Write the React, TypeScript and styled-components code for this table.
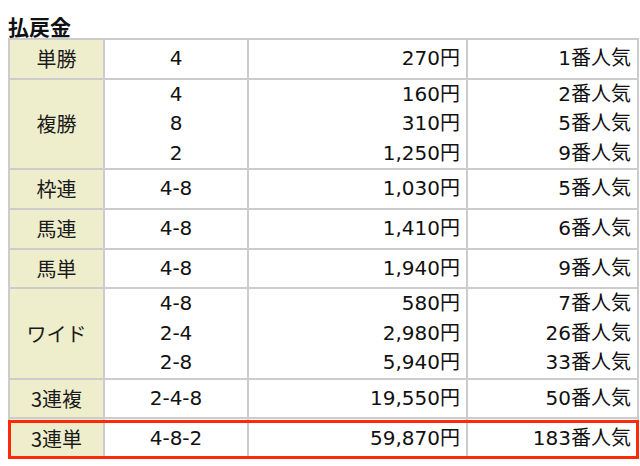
import React from "react";
import styled, { createGlobalStyle } from "styled-components";

const Global = createGlobalStyle`
  html, body { margin: 0; padding: 0; background: #fff; }
  body {
    font-family: "DejaVu Sans", "Noto Sans CJK JP", sans-serif;
    color: #111;
  }
`;

const Page = styled.div`
  padding: 14px 0 0 8px;
`;

const Heading = styled.h2`
  margin: 0;
  font-size: 21px;
  line-height: 24px;
  font-weight: bold;
  font-family: "Noto Sans CJK JP", sans-serif;
  color: #111;
`;

const TableWrap = styled.div`
  position: relative;
  width: 629px;
`;

const Table = styled.table`
  width: 629px;
  table-layout: fixed;
  border-collapse: separate;
  border-spacing: 0;
  border: 1px solid #ccc;
  font-size: 20px;
`;

const Col = styled.col<{ $w: number }>`
  width: ${(p) => p.$w}px;
`;

const Label = styled.th`
  background: #eeeecd;
  border: 1px solid #ccc;
  font-weight: normal;
  font-family: "Noto Sans CJK JP", sans-serif;
  font-size: 20px;
  color: #1a1a1a;
  text-align: center;
  padding: 0;
  height: 37.7px;
  line-height: 29.5px;
`;

const Cell = styled.td<{ $align: "center" | "right" }>`
  background: #fff;
  border: 1px solid #ccc;
  text-align: ${(p) => p.$align};
  padding: 0 ${(p) => (p.$align === "right" ? "6px" : "0")} 0 0;
  height: 37.7px;
  line-height: 29.5px;
  font-family: "DejaVu Sans", "Noto Sans CJK JP", sans-serif;
  color: #111;
  white-space: nowrap;
`;

const Line = styled.div`
  display: block;
`;

const Highlight = styled.div`
  position: absolute;
  left: 0;
  right: -2px;
  bottom: 0;
  height: 39px;
  border: 3px solid #ff2a0a;
  box-sizing: border-box;
  pointer-events: none;
`;

type Entry = [string, string, string];
type Row = { label: string; entries: Entry[] };

const rows: Row[] = [
  { label: "単勝", entries: [["4", "270円", "1番人気"]] },
  {
    label: "複勝",
    entries: [
      ["4", "160円", "2番人気"],
      ["8", "310円", "5番人気"],
      ["2", "1,250円", "9番人気"],
    ],
  },
  { label: "枠連", entries: [["4-8", "1,030円", "5番人気"]] },
  { label: "馬連", entries: [["4-8", "1,410円", "6番人気"]] },
  { label: "馬単", entries: [["4-8", "1,940円", "9番人気"]] },
  {
    label: "ワイド",
    entries: [
      ["4-8", "580円", "7番人気"],
      ["2-4", "2,980円", "26番人気"],
      ["2-8", "5,940円", "33番人気"],
    ],
  },
  { label: "3連複", entries: [["2-4-8", "19,550円", "50番人気"]] },
  { label: "3連単", entries: [["4-8-2", "59,870円", "183番人気"]] },
];

const Stack = ({ items }: { items: string[] }) => (
  <>
    {items.map((t, i) => (
      <Line key={i}>{t}</Line>
    ))}
  </>
);

export default function App() {
  return (
    <>
      <Global />
      <Page>
        <Heading>払戻金</Heading>
        <TableWrap>
          <Table>
            <colgroup>
              <Col $w={95} />
              <Col $w={144} />
              <Col $w={219} />
              <Col $w={171} />
            </colgroup>
            <tbody>
              {rows.map((r) => (
                <tr key={r.label}>
                  <Label>{r.label}</Label>
                  <Cell $align="center">
                    <Stack items={r.entries.map((e) => e[0])} />
                  </Cell>
                  <Cell $align="right">
                    <Stack items={r.entries.map((e) => e[1])} />
                  </Cell>
                  <Cell $align="right">
                    <Stack items={r.entries.map((e) => e[2])} />
                  </Cell>
                </tr>
              ))}
            </tbody>
          </Table>
          <Highlight />
        </TableWrap>
      </Page>
    </>
  );
}
